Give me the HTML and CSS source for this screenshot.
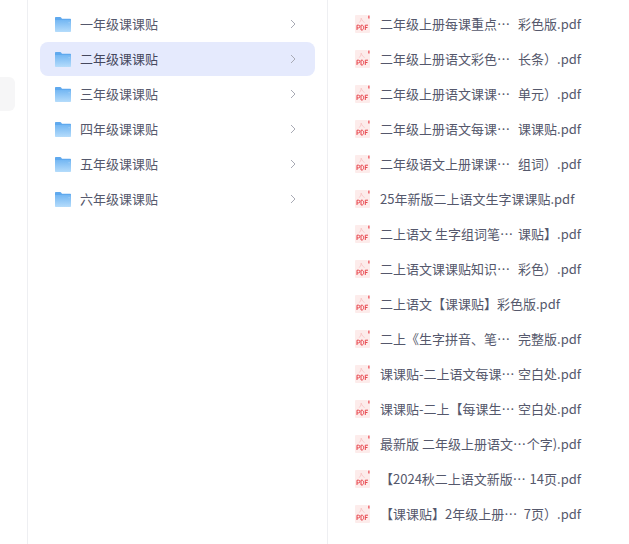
FILE: index.html
```html
<!DOCTYPE html>
<html lang="zh-CN">
<head>
<meta charset="utf-8">
<title>课课贴</title>
<link rel="stylesheet" href="styles.css">
</head>
<body>
<svg class="defs" width="0" height="0" aria-hidden="true">
  <defs>
    <linearGradient id="fg" x1="0" y1="0" x2="0" y2="1"><stop offset="0" stop-color="#74b7f3"/><stop offset="1" stop-color="#b5dcfb"/></linearGradient>
    <symbol id="folder" viewBox="0 0 16 15">
      <path d="M0 1C0 .4.400 0 1 0h4.200c.4 0 .7.200.9.500L7 1.800h8c.6 0 1 .4 1 1V5H0z" fill="#5fa9ee"/>
      <path d="M0 3h15c.6 0 1 .4 1 1v10c0 .6-.4 1-1 1H1c-.6 0-1-.4-1-1z" fill="url(#fg)"/>
      <rect x="13.500" y="5" width="1.300" height="1.300" fill="#9ccbf5"/>
    </symbol>
    <symbol id="pdf" viewBox="0 0 15 18">
      <path d="M1 0h11l3 3v14a1 1 0 0 1-1 1H1a1 1 0 0 1-1-1V1a1 1 0 0 1 1-1z" fill="#fdeceb"/>
      <path d="M13.300 .5h1.200v3h-1.200z" fill="#e9434a"/>
      <path d="M6.200 3.200c.6 2 1.600 3.400 3.400 4.200M6.200 3.200c-.2 2-.8 3.300-2 4.400" stroke="#f6bcbc" stroke-width=".8" fill="none"/>
      <path d="M2 15v-4.800h1.500a1.300 1.300 0 0 1 0 2.700H2M6 10.200V15h.9c1.200 0 1.700-1 1.700-2.400s-.5-2.400-1.700-2.400zM10.300 15v-4.800h2.700M10.300 12.500h2.200" stroke="#e8474e" stroke-width="1" fill="none"/>
    </symbol>
  </defs>
</svg>
<div class="page">
  <aside class="rail"><div class="rail-card"></div></aside>
  <nav class="grades">
    <div class="grade"><svg class="folder"><use href="#folder"/></svg><span class="grade-name">一年级课课贴</span><svg class="chev" viewBox="0 0 6 10"><path d="M1 1l4 4-4 4"/></svg></div>
    <div class="grade active"><svg class="folder"><use href="#folder"/></svg><span class="grade-name">二年级课课贴</span><svg class="chev" viewBox="0 0 6 10"><path d="M1 1l4 4-4 4"/></svg></div>
    <div class="grade"><svg class="folder"><use href="#folder"/></svg><span class="grade-name">三年级课课贴</span><svg class="chev" viewBox="0 0 6 10"><path d="M1 1l4 4-4 4"/></svg></div>
    <div class="grade"><svg class="folder"><use href="#folder"/></svg><span class="grade-name">四年级课课贴</span><svg class="chev" viewBox="0 0 6 10"><path d="M1 1l4 4-4 4"/></svg></div>
    <div class="grade"><svg class="folder"><use href="#folder"/></svg><span class="grade-name">五年级课课贴</span><svg class="chev" viewBox="0 0 6 10"><path d="M1 1l4 4-4 4"/></svg></div>
    <div class="grade"><svg class="folder"><use href="#folder"/></svg><span class="grade-name">六年级课课贴</span><svg class="chev" viewBox="0 0 6 10"><path d="M1 1l4 4-4 4"/></svg></div>
  </nav>
  <main class="files">
    <div class="file"><svg class="pdf"><use href="#pdf"/></svg><div class="name"><span>二年级上册每课重点…</span><span>彩色版.pdf</span></div></div>
    <div class="file"><svg class="pdf"><use href="#pdf"/></svg><div class="name"><span>二年级上册语文彩色…</span><span>长条）.pdf</span></div></div>
    <div class="file"><svg class="pdf"><use href="#pdf"/></svg><div class="name"><span>二年级上册语文课课…</span><span>单元）.pdf</span></div></div>
    <div class="file"><svg class="pdf"><use href="#pdf"/></svg><div class="name"><span>二年级上册语文每课…</span><span>课课贴.pdf</span></div></div>
    <div class="file"><svg class="pdf"><use href="#pdf"/></svg><div class="name"><span>二年级语文上册课课…</span><span>组词）.pdf</span></div></div>
    <div class="file"><svg class="pdf"><use href="#pdf"/></svg><div class="name"><span>25年新版二上语文生字课课贴.pdf</span></div></div>
    <div class="file"><svg class="pdf"><use href="#pdf"/></svg><div class="name"><span>二上语文 生字组词笔…</span><span>课贴】.pdf</span></div></div>
    <div class="file"><svg class="pdf"><use href="#pdf"/></svg><div class="name"><span>二上语文课课贴知识…</span><span>彩色）.pdf</span></div></div>
    <div class="file"><svg class="pdf"><use href="#pdf"/></svg><div class="name"><span>二上语文【课课贴】彩色版.pdf</span></div></div>
    <div class="file"><svg class="pdf"><use href="#pdf"/></svg><div class="name"><span>二上《生字拼音、笔…</span><span>完整版.pdf</span></div></div>
    <div class="file"><svg class="pdf"><use href="#pdf"/></svg><div class="name"><span>课课贴-二上语文每课…</span><span>空白处.pdf</span></div></div>
    <div class="file"><svg class="pdf"><use href="#pdf"/></svg><div class="name"><span>课课贴-二上【每课生…</span><span>空白处.pdf</span></div></div>
    <div class="file"><svg class="pdf"><use href="#pdf"/></svg><div class="name"><span>最新版 二年级上册语文…</span><span>个字).pdf</span></div></div>
    <div class="file"><svg class="pdf"><use href="#pdf"/></svg><div class="name"><span>【2024秋二上语文新版…</span><span>14页.pdf</span></div></div>
    <div class="file"><svg class="pdf"><use href="#pdf"/></svg><div class="name"><span>【课课贴】2年级上册…</span><span>7页）.pdf</span></div></div>
  </main>
</div>
</body>
</html>
```
FILE: styles.css
```css
* { box-sizing: border-box; }
html, body { margin: 0; height: 100%; background: #fff; overflow: hidden; }
body { font-family: "Noto Sans CJK SC", "Noto Sans", sans-serif; font-size: 13px; color: #55586c; }
.defs { display: block; height: 0; width: 0; }
.page { display: flex; height: 544px; width: 629px; }
.rail { width: 28px; flex: none; padding-top: 77px; border-right: 1px solid #eeeff2; }
.rail-card { width: 15px; height: 34px; background: #f6f6f7; border-radius: 0 6px 6px 0; }
.grades { width: 300px; flex: none; padding: 7px 12px 0; border-right: 1px solid #eeeff2; display: flex; flex-direction: column; gap: 1px; }
.grade { display: flex; align-items: center; height: 34px; padding: 0 19px 0 15px; border-radius: 8px; }
.grade.active { background: #e5eafd; color: #45485e; }
.folder { width: 16px; height: 15px; flex: none; margin-right: 9px; }
.grade-name { flex: 1; padding-bottom: 2px; }
.chev { width: 6px; height: 10px; flex: none; fill: none; stroke: #a9abb5; stroke-width: 1; }
.files { flex: 1; padding: 6px 48px 0 27px; }
.file { display: flex; align-items: center; height: 35px; }
.pdf { width: 15px; height: 18px; flex: none; margin-right: 10px; }
.name { flex: 1; display: flex; justify-content: space-between; white-space: nowrap; }
```
